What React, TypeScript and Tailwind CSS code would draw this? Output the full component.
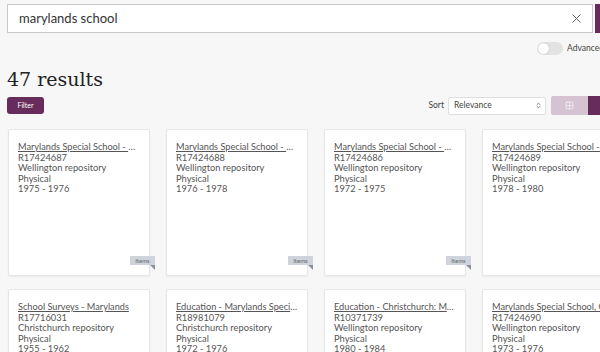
import React from 'react';
import { X, Grid2x2, ChevronsUpDown } from 'lucide-react';

interface Record {
  title: string;
  id: string;
  repo: string;
  format: string;
  dates: string;
  items?: boolean;
}

const records: Record[] = [
  { title: 'Marylands Special School - Correspondence', id: 'R17424687', repo: 'Wellington repository', format: 'Physical', dates: '1975 - 1976', items: true },
  { title: 'Marylands Special School - Correspondence', id: 'R17424688', repo: 'Wellington repository', format: 'Physical', dates: '1976 - 1978', items: true },
  { title: 'Marylands Special School - Correspondence', id: 'R17424686', repo: 'Wellington repository', format: 'Physical', dates: '1972 - 1975', items: true },
  { title: 'Marylands Special School - Correspondence', id: 'R17424689', repo: 'Wellington repository', format: 'Physical', dates: '1978 - 1980' },
  { title: 'School Surveys - Marylands', id: 'R17716031', repo: 'Christchurch repository', format: 'Physical', dates: '1955 - 1962' },
  { title: 'Education - Marylands Special School', id: 'R18981079', repo: 'Christchurch repository', format: 'Physical', dates: '1972 - 1976' },
  { title: 'Education - Christchurch: Marylands School', id: 'R10371739', repo: 'Wellington repository', format: 'Physical', dates: '1980 - 1984' },
  { title: 'Marylands Special School, Christchurch', id: 'R17424690', repo: 'Wellington repository', format: 'Physical', dates: '1973 - 1976' },
];

const RecordCard: React.FC<{ record: Record }> = ({ record }) => (
  <div className="relative w-[142px] h-[147px] shrink-0 bg-white border border-[#e6e6e6] rounded-[2px] shadow-[0_1px_2px_rgba(0,0,0,0.06)] pt-[10px] px-[9px]">
    <div className="text-[9.2px] leading-[13px] text-[#555] underline whitespace-nowrap overflow-hidden text-ellipsis">
      {record.title}
    </div>
    <div className="text-[9.3px] leading-[10.4px] text-[#555]">
      <div>{record.id}</div>
      <div>{record.repo}</div>
      <div>{record.format}</div>
      <div>{record.dates}</div>
    </div>
    {record.items && (
      <div className="absolute right-[-6px] bottom-[10px]">
        <div className="w-[25px] h-[9px] bg-[#cfd4dc] text-[6px] leading-[9px] text-[#666] text-center">Items</div>
        <div className="absolute right-0 top-[9px] w-0 h-0 border-t-[5px] border-t-[#8a909a] border-l-[5px] border-l-transparent" />
      </div>
    )}
  </div>
);

const App: React.FC = () => {
  return (
    <div className="w-[600px] h-[352px] overflow-hidden bg-[#f7f7f7] text-[#333]" style={{ fontFamily: 'Lato, "Noto Sans", sans-serif' }}>
      <div className="flex gap-[2px] pl-[7px] pt-[4px]">
        <div className="w-[586px] h-[29px] shrink-0 bg-white border border-[#c9c9c9] flex items-center justify-between pl-[11px] pr-[8px]">
          <span className="text-[13px] text-[#333]">marylands school</span>
          <X size={15} strokeWidth={1.6} className="text-[#666]" />
        </div>
        <div className="w-[60px] h-[29px] shrink-0 bg-[#682c5c]" />
      </div>

      <div className="flex justify-end items-center pt-[9px]">
        <div className="flex items-center gap-[4px] mr-[-37px]">
          <div className="relative w-[26px] h-[13px] rounded-full bg-[#e2e2e2]">
            <div className="absolute left-[1px] top-[1px] w-[11px] h-[11px] rounded-full bg-white shadow-[0_0_1px_rgba(0,0,0,0.3)]" />
          </div>
          <span className="text-[8.5px] text-[#444] w-[70px]">Advanced search</span>
        </div>
      </div>

      <div className="pl-[7px] pt-[11px]">
        <h1 className="text-[19px] leading-[26px] text-[#222]" style={{ fontFamily: '"DejaVu Serif", serif' }}>
          47 results
        </h1>
      </div>

      <div className="flex justify-between items-center pl-[7px] pt-[4px]">
        <button className="w-[37px] h-[17px] bg-[#682c5c] text-white text-[7px] rounded-[3px]">Filter</button>
        <div className="flex items-center">
          <span className="text-[8.5px] text-[#444] mr-[4px]">Sort</span>
          <div className="w-[98px] h-[18px] bg-white border border-[#dedede] rounded-[2px] flex items-center justify-between pl-[5px] pr-[3px]">
            <span className="text-[8.5px] text-[#444]">Relevance</span>
            <ChevronsUpDown size={7} strokeWidth={2.5} className="text-[#555]" />
          </div>
          <div className="ml-[5px] flex">
            <div className="w-[37px] h-[19px] bg-[#d6c3d1] rounded-l-[2px] flex items-center justify-center">
              <Grid2x2 size={9} strokeWidth={1.5} className="text-white" />
            </div>
            <div className="w-[12px] h-[19px] bg-[#682c5c] shrink-0" />
          </div>
        </div>
      </div>

      <div className="flex flex-wrap w-[800px] gap-x-4 gap-y-[13px] pl-[8px] pt-[14px]">
        {records.slice(0, 4).map((r, i) => (
          <RecordCard key={i} record={r} />
        ))}
        <div className="w-[142px] shrink-0" />
        {records.slice(4).map((r, i) => (
          <RecordCard key={i + 4} record={r} />
        ))}
      </div>
    </div>
  );
};

export default App;
